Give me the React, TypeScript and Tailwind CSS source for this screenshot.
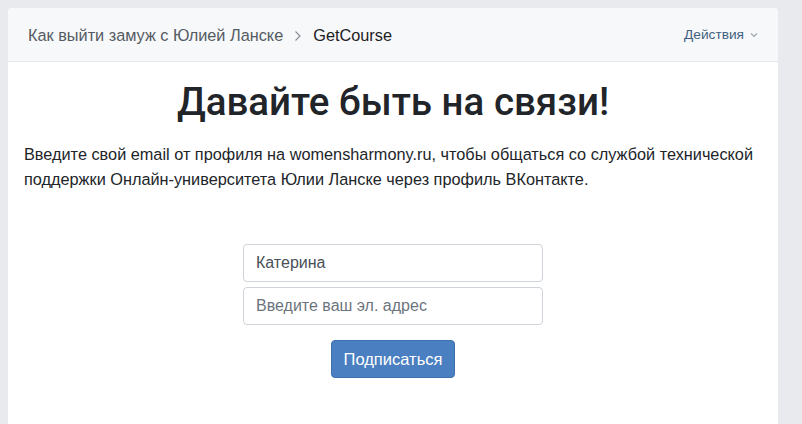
import React from 'react'

export default function App() {
  return (
    <div
      className="min-h-screen w-full bg-[#e9eaed] pl-2 pr-6 pt-2"
      style={{ fontFamily: '"Liberation Sans", Arial, sans-serif' }}
    >
      <div className="min-h-[416px] rounded-t-[4px] bg-white">
        <div className="flex h-[54px] items-center justify-between rounded-t-[4px] border-b border-[#e3e6ea] bg-[#f7f8fa] pl-5 pr-5">
          <div className="flex items-center pt-[2px] text-[16.3px]">
            <span className="text-[#555b62]">Как выйти замуж с Юлией Ланске</span>
            <span className="mx-[11px]">
              <svg width="8" height="12" viewBox="0 0 8 12" fill="none">
                <path d="M1.5 1.5 L6 6 L1.5 10.5" stroke="#8a9096" strokeWidth="1.2" />
              </svg>
            </span>
            <span className="text-[#1d2124]">GetCourse</span>
          </div>
          <div className="flex items-center gap-[6px] pt-[2px] text-[13.7px] text-[#3f5f80]">
            <span>Действия</span>
            <svg width="8" height="6" viewBox="0 0 8 6" fill="none">
              <path d="M1 1.5 L4 4.5 L7 1.5" stroke="#9aa3ad" strokeWidth="1.1" />
            </svg>
          </div>
        </div>
        <div className="px-4 pt-[14px]">
          <h1
            className="text-center text-[38.5px] font-medium leading-[52px] text-[#212529]"
            style={{ fontFamily: 'Roboto, "Liberation Sans", sans-serif' }}
          >
            Давайте быть на связи!
          </h1>
          <p className="mt-[14px] text-[16.3px] leading-[25px] text-[#212529]">
            Введите свой email от профиля на womensharmony.ru, чтобы общаться со службой технической
            поддержки Онлайн-университета Юлии Ланске через профиль ВКонтакте.
          </p>
          <div className="mt-[52px] flex flex-col items-center">
            <input
              className="h-[38px] w-[300px] rounded-[4px] border border-[#ced4da] bg-white px-3 text-[16px] text-[#495057] outline-none"
              defaultValue="Катерина"
            />
            <input
              className="mt-[5px] h-[38px] w-[300px] rounded-[4px] border border-[#ced4da] bg-white px-3 text-[16px] text-[#495057] outline-none placeholder:text-[#6c757d]"
              placeholder="Введите ваш эл. адрес"
            />
            <button className="mt-[15px] h-[38px] w-[124px] rounded-[4px] border border-[#3f70ad] bg-[#4a7fc1] text-[16.5px] text-white">
              Подписаться
            </button>
          </div>
        </div>
      </div>
    </div>
  )
}
